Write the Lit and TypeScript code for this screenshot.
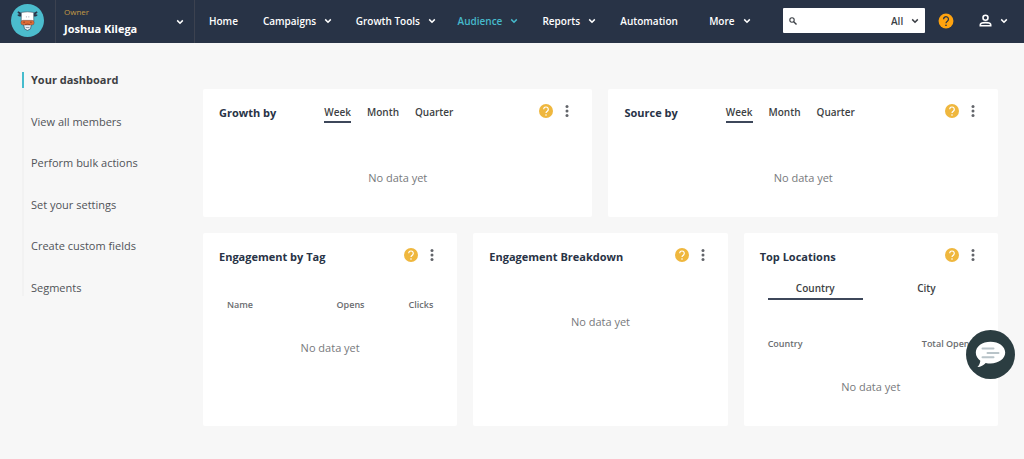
import { LitElement, html, css, svg, nothing } from "lit";
import { customElement, property, state } from "lit/decorators.js";
import { classMap } from "lit/directives/class-map.js";

const chevron = html`<svg class="chevron" width="8" height="8" viewBox="0 0 8 8" aria-hidden="true">
  <path d="M1.2 2.4 4 5.2 6.8 2.4" fill="none" stroke="currentColor" stroke-width="1.5" />
</svg>`;

const questionMark = svg`
  <path d="M4.7 5.3a2.3 2.3 0 1 1 3.6 1.9c-.9.6-1.3 1-1.3 1.9" fill="none" stroke="currentColor" stroke-width="1.2" />
  <circle cx="7" cy="11" r=".8" fill="currentColor" />`;

const resets = css`
  * {
    box-sizing: border-box;
  }
  button,
  input,
  select {
    font: inherit;
    color: inherit;
    margin: 0;
    padding: 0;
    border: 0;
    background: none;
  }
  button {
    cursor: pointer;
  }
  a {
    color: inherit;
    text-decoration: none;
  }
  ul {
    list-style: none;
    margin: 0;
    padding: 0;
  }
  svg {
    display: block;
    flex: none;
  }
`;

@customElement("top-bar")
export class TopBar extends LitElement {
  static styles = [
    resets,
    css`
      :host {
        display: flex;
        height: 43px;
        background: #283346;
        color: #fff;
        font-size: 11px;
        line-height: 16px;
      }
      .logo {
        display: flex;
        align-items: center;
        width: 56px;
        padding-left: 11px;
        padding-bottom: 2px;
        border-right: 1px solid #3c4250;
      }
      .account {
        display: flex;
        align-items: center;
        justify-content: space-between;
        width: 139px;
        padding: 0 10px 0 8px;
        border-right: 1px solid #3c4250;
        text-align: left;
      }
      .role {
        display: block;
        color: #c39a45;
        font-size: 8px;
        line-height: 14px;
      }
      .name {
        display: block;
        font-weight: 700;
        line-height: 20px;
      }
      .links {
        flex: 1;
        padding-left: 14px;
      }
      .links ul {
        display: grid;
        grid-template-columns: 54fr 93fr 102fr 85fr 78fr 89fr 74fr;
        height: 100%;
        align-items: center;
        padding-bottom: 2px;
      }
      .link {
        display: flex;
        align-items: center;
        gap: 8px;
        font-size: 10px;
        font-weight: 600;
        white-space: nowrap;
      }
      .link.current {
        color: #46b9cb;
      }
      .tools {
        display: flex;
        align-items: center;
        padding-bottom: 2px;
      }
      .search {
        display: flex;
        align-items: center;
        width: 142px;
        height: 25px;
        padding: 0 6px;
        border-radius: 1px;
        background: #fff;
        color: #3b3f45;
      }
      .query {
        flex: 1;
        min-width: 0;
        padding: 0 4px;
        outline: none;
      }
      .scope {
        appearance: none;
        width: 20px;
        font-size: 10px;
        font-weight: 600;
      }
      .help {
        margin-left: 13px;
        color: #283346;
      }
      .user {
        display: flex;
        align-items: center;
        gap: 8px;
        margin: 0 16px 0 25px;
      }
    `,
  ];

  private links = [
    { label: "Home", menu: false },
    { label: "Campaigns", menu: true },
    { label: "Growth Tools", menu: true },
    { label: "Audience", menu: true, current: true },
    { label: "Reports", menu: true },
    { label: "Automation", menu: false },
    { label: "More", menu: true },
  ];

  render() {
    return html`
      <a class="logo" href="#" aria-label="Home page">
        <svg width="33" height="33" viewBox="0 0 33 33" aria-hidden="true">
          <circle cx="16.5" cy="16.5" r="16.5" fill="#4bbccd" />
          <path d="M10 8.7 7.2 7.2 6.4 8.6 9.8 11.4zM23 8.7l2.8-1.5.8 1.4-3.400 2.800z" fill="#2b3448" />
          <path d="M10.500 10.600c-2-.8-3.600-.5-4.200.3 1 1.300 2.400 1.700 4.200 1.500zM22.500 10.600c2-.8 3.600-.5 4.200.3-1 1.300-2.400 1.700-4.200 1.500z" fill="#2b3448" />
          <path d="M12.600 20.500h7.800l-.9 4.300-3 1.700-3-1.700z" fill="#e7edf2" stroke="#2b3448" stroke-width=".6" />
          <path d="M14.800 23.500h3.600" stroke="#59617a" stroke-width=".6" />
          <path d="M10.400 8.400q6.100-1.200 12.200 0l.2 8.800h-12.600z" fill="#fff" stroke="#2b3448" stroke-width=".5" />
          <path d="M15.400 12.400v1M17.800 12.400v1" stroke="#8b93a5" stroke-width=".8" />
          <rect x="9.800" y="16.300" width="13.400" height="4.800" rx="2.300" fill="#dc6a35" stroke="#2b3448" stroke-width=".3" />
          <path d="M12.300 18.200h1.600M19.100 18.200h1.600" stroke="#71351f" stroke-width=".8" />
          <path d="M14 20.700q2.500-1.300 5 0" fill="none" stroke="#71351f" stroke-width=".6" />
        </svg>
      </a>
      <button class="account">
        <span><span class="role">Owner</span><span class="name">Joshua Kilega</span></span>
        ${chevron}
      </button>
      <nav class="links" aria-label="Main">
        <ul>
          ${this.links.map(
            (l) => html`<li>
              <a class=${classMap({ link: true, current: !!l.current })} href="#">${l.label}${l.menu ? chevron : nothing}</a>
            </li>`
          )}
        </ul>
      </nav>
      <div class="tools">
        <form class="search" role="search">
          <svg width="8" height="8" viewBox="0 0 8 8" aria-hidden="true">
            <circle cx="3" cy="3" r="2.2" fill="none" stroke="currentColor" stroke-width="1.1" />
            <path d="m4.7 4.7 2.8 2.8" stroke="currentColor" stroke-width="1.4" />
          </svg>
          <input class="query" type="text" aria-label="Search" />
          <select class="scope" aria-label="Search in">
            <option>All</option>
          </select>
          ${chevron}
        </form>
        <button class="help" aria-label="Help">
          <svg width="16" height="16" viewBox="-.5 -.5 15 15">
            <circle cx="7" cy="7" r="7" fill="#ffa30f" />
            ${questionMark}
          </svg>
        </button>
        <button class="user" aria-label="Profile menu">
          <svg width="13" height="13" viewBox="0 0 13 13">
            <circle cx="6.5" cy="3.7" r="2.5" fill="none" stroke="currentColor" stroke-width="1.6" />
            <path d="M1.3 11.7V10.7c0-1.3 2.6-2.1 5.2-2.1s5.2.8 5.2 2.1v1z" fill="none" stroke="currentColor" stroke-width="1.6" />
          </svg>
          ${chevron}
        </button>
      </div>
    `;
  }
}

@customElement("side-menu")
export class SideMenu extends LitElement {
  static styles = [
    resets,
    css`
      :host {
        display: block;
        color: #505357;
        font-size: 11px;
        line-height: 16px;
      }
      .menu {
        display: flex;
        flex-direction: column;
        justify-content: space-between;
        min-height: 224px;
        box-shadow: inset 2px 0 #f2f2f2;
      }
      .item {
        display: block;
        padding-left: 7px;
        border-left: 2px solid transparent;
      }
      .item.active {
        border-color: #46bccd;
        color: #3d3f43;
        font-weight: 700;
      }
    `,
  ];

  private items = [
    "Your dashboard",
    "View all members",
    "Perform bulk actions",
    "Set your settings",
    "Create custom fields",
    "Segments",
  ];

  render() {
    return html`<nav aria-label="Audience">
      <ul class="menu">
        ${this.items.map(
          (label, i) => html`<li><a class=${classMap({ item: true, active: i === 0 })} href="#">${label}</a></li>`
        )}
      </ul>
    </nav>`;
  }
}

@customElement("tab-strip")
export class TabStrip extends LitElement {
  @property({ type: Array }) tabs: string[] = [];
  @property({ type: Boolean }) wide = false;
  @state() private selected = 0;

  static styles = [
    resets,
    css`
      :host {
        display: block;
        color: #3d3f43;
        font-size: 10px;
        font-weight: 600;
        line-height: 18px;
      }
      .strip {
        display: flex;
        gap: 16px;
      }
      .wide {
        line-height: 20px;
      }
      .wide .tab {
        flex: 1;
      }
      .tab {
        border-bottom: 2px solid transparent;
      }
      .tab.selected {
        border-color: #3d475a;
      }
    `,
  ];

  render() {
    return html`<div class=${classMap({ strip: true, wide: this.wide })} role="tablist">
      ${this.tabs.map(
        (t, i) => html`<button
          role="tab"
          aria-selected=${i === this.selected ? "true" : "false"}
          class=${classMap({ tab: true, selected: i === this.selected })}
          @click=${() => (this.selected = i)}
        >${t}</button>`
      )}
    </div>`;
  }
}

@customElement("stat-card")
export class StatCard extends LitElement {
  @property() heading = "";
  @property({ type: Array }) periods: string[] = [];
  @property({ type: Array }) views: string[] = [];
  @property({ type: Array }) columns: string[] = [];

  static styles = [
    resets,
    css`
      :host {
        display: block;
        padding: 14px 16px 29px;
        border-radius: 2px;
        background: #fff;
      }
      .head {
        display: flex;
        align-items: flex-start;
        height: 22px;
      }
      .heading {
        margin: 0;
        color: #283346;
        font-size: 11px;
        font-weight: 700;
        line-height: 20px;
      }
      .periods {
        margin-left: 48px;
      }
      .actions {
        display: flex;
        align-items: center;
        gap: 6px;
        height: 16px;
        margin-left: auto;
      }
      .help {
        color: #fff;
      }
      .more {
        color: #62656a;
      }
      .views {
        margin: 9px 8px 0;
      }
      .table {
        width: 100%;
        margin-top: 28px;
        border-collapse: collapse;
        color: #6a6d70;
        font-size: 9px;
        line-height: 16px;
      }
      .views + .table {
        margin-top: 36px;
      }
      .table th {
        padding: 0;
        font-weight: 600;
        text-align: right;
      }
      .table th:first-child {
        padding-left: 8px;
        text-align: left;
      }
      .table th:last-child {
        padding-right: 8px;
      }
      .table .blank {
        padding: 25px 0 0;
      }
      .empty {
        margin: 0;
        color: #77797c;
        font-size: 11px;
        line-height: 20px;
        text-align: center;
      }
      .empty.alone {
        padding-top: 43px;
      }
    `,
  ];

  render() {
    return html`
      <div class="head">
        <h2 class="heading">${this.heading}</h2>
        ${this.periods.length ? html`<tab-strip class="periods" .tabs=${this.periods}></tab-strip>` : nothing}
        <div class="actions">
          <button class="help" aria-label="About ${this.heading}">
            <svg width="14" height="14" viewBox="0 0 14 14">
              <circle cx="7" cy="7" r="7" fill="#efb73e" />
              ${questionMark}
            </svg>
          </button>
          <button class="more" aria-label="More options">
            <svg width="17" height="14" viewBox="0 0 17 14" fill="currentColor">
              <circle cx="8" cy="2.5" r="1.5" />
              <circle cx="8" cy="7" r="1.5" />
              <circle cx="8" cy="11.5" r="1.5" />
            </svg>
          </button>
        </div>
      </div>
      ${this.views.length ? html`<tab-strip class="views" wide .tabs=${this.views}></tab-strip>` : nothing}
      ${this.columns.length
        ? html`<table class="table">
            <thead>
              <tr>${this.columns.map((c) => html`<th scope="col">${c}</th>`)}</tr>
            </thead>
            <tbody>
              <tr>
                <td class="blank" colspan=${this.columns.length}><p class="empty">No data yet</p></td>
              </tr>
            </tbody>
          </table>`
        : html`<p class="empty alone">No data yet</p>`}
    `;
  }
}

@customElement("app-root")
export class AppRoot extends LitElement {
  static styles = [
    resets,
    css`
      :host {
        display: block;
        min-height: 100vh;
        background: #f7f7f7;
        font-family: "Open Sans", "Noto Sans", sans-serif;
      }
      .page {
        display: flex;
        align-items: flex-start;
        padding: 29px 26px 32px 22px;
      }
      .side {
        width: 181px;
        flex: none;
      }
      .board {
        display: grid;
        grid-template-columns: repeat(6, 1fr);
        gap: 16px;
        flex: 1;
        padding-top: 17px;
      }
      .half {
        grid-column: span 3;
      }
      .third {
        grid-column: span 2;
      }
      .chat {
        position: fixed;
        right: 9px;
        bottom: 80px;
        border-radius: 50%;
      }
    `,
  ];

  private periods = ["Week", "Month", "Quarter"];

  render() {
    return html`
      <top-bar></top-bar>
      <main class="page">
        <side-menu class="side"></side-menu>
        <div class="board">
          <stat-card class="half" heading="Growth by" .periods=${this.periods}></stat-card>
          <stat-card class="half" heading="Source by" .periods=${this.periods}></stat-card>
          <stat-card class="third" heading="Engagement by Tag" .columns=${["Name", "Opens", "Clicks"]}></stat-card>
          <stat-card class="third" heading="Engagement Breakdown"></stat-card>
          <stat-card
            class="third"
            heading="Top Locations"
            .views=${["Country", "City"]}
            .columns=${["Country", "Total Opens"]}
          ></stat-card>
        </div>
      </main>
      <button class="chat" aria-label="Open chat">
        <svg width="49" height="49" viewBox="0 0 49 49">
          <circle cx="24.5" cy="24.5" r="24.5" fill="#2b3d41" />
          <path
            d="M24.5 11.7c8.2 0 14.7 4.7 14.7 10.9s-6.500 10.900-14.700 10.900c-1.700 0-3.300-.2-4.800-.6-2 2.200-4.800 3.800-8.300 4.200 1.800-1.700 2.700-3.800 2.900-6.300-2.800-2-4.500-4.900-4.500-8.200 0-6.200 6.500-10.900 14.700-10.900z"
            fill="#fff"
          />
          <path d="M16.5 18.5h11M21.5 22.9h11M16.5 27.3h11" stroke="#b9c4c9" stroke-width="2" stroke-linecap="round" />
        </svg>
      </button>
    `;
  }
}
